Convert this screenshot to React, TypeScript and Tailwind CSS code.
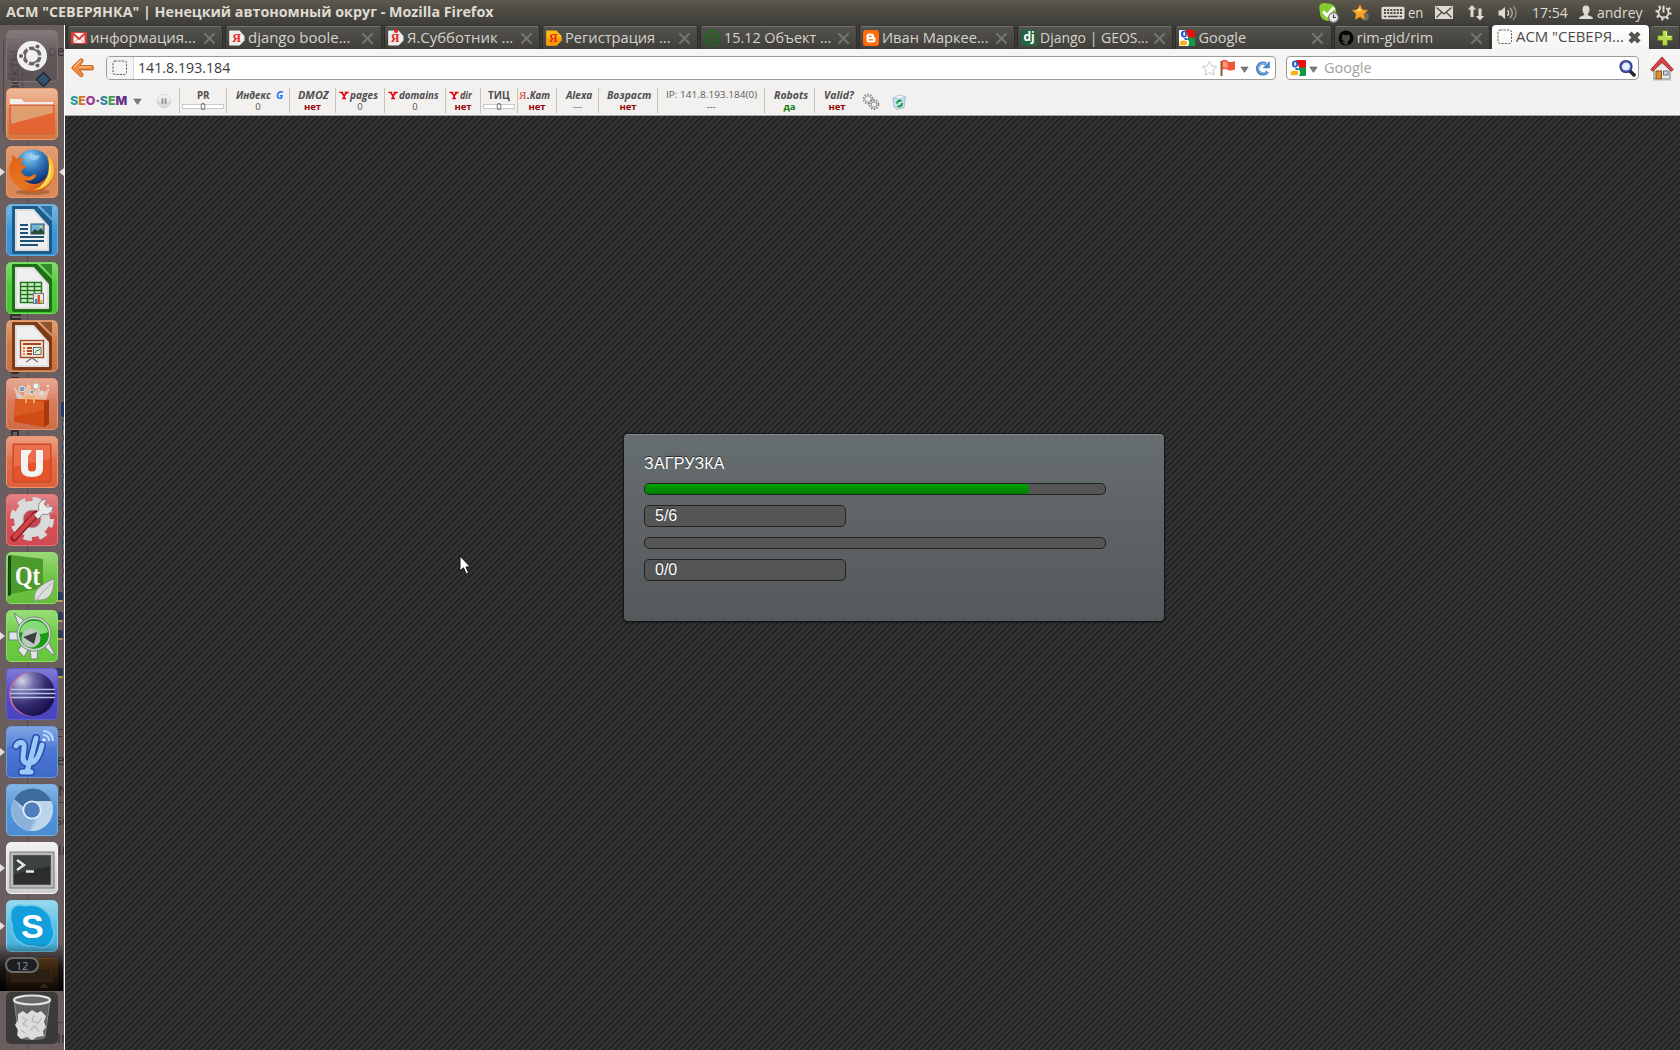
import React, { useLayoutEffect, useRef, useState } from "react";

const UI = "font-['Open_Sans','Noto_Sans',sans-serif]";

/* Text squeezed or stretched horizontally to an exact width. */
function Fit({ w, className = "", children }: { w: number; className?: string; children: React.ReactNode }) {
  const ref = useRef<HTMLSpanElement>(null);
  const [k, setK] = useState(1);
  useLayoutEffect(() => {
    if (ref.current) setK(w / ref.current.offsetWidth);
  }, [w]);
  return (
    <span className="flex shrink-0 whitespace-nowrap" style={{ width: w }}>
      <span ref={ref} className={`block shrink-0 origin-left whitespace-nowrap ${className}`} style={{ transform: `scaleX(${k})` }}>
        {children}
      </span>
    </span>
  );
}

/* ---------- small icons ---------- */

function GoogleIcon() {
  return (
    <svg width="16" height="16" viewBox="0 0 16 16" className="shrink-0">
      <rect width="16" height="16" rx="1" fill="#fff" />
      <path d="M6 0H15a1 1 0 0 1 1 1V8H9L8 4z" fill="#e8100c" />
      <path d="M9 7.5h7V15a1 1 0 0 1-1 1H9c2-3 1-5 0-6z" fill="#109a41" />
      <path d="M0 16v-5l2 1v4z" fill="#f3b51b" opacity=".3" />
      <ellipse cx="5" cy="4" rx="3" ry="3.6" fill="#1c56c9" />
      <ellipse cx="5.2" cy="4" rx="1.1" ry="2" fill="#e9effb" />
      <path d="M5 8l3 .3 1.500 1.700L6 10z" fill="#1c56c9" />
      <ellipse cx="4.600" cy="13" rx="3.700" ry="2.500" fill="#f6b21a" />
    </svg>
  );
}

function DashedPage() {
  return (
    <svg width="16" height="16" viewBox="0 0 16 16" className="shrink-0">
      <rect x="1" y="1" width="13.500" height="13.500" rx="2" fill="none" stroke="#5c5c5c" strokeWidth="1" strokeDasharray="2.200 1.200" />
    </svg>
  );
}

function YandexIcon({ kind }: { kind: "white" | "orange" | "man" }) {
  const orange = kind === "orange";
  return (
    <span className="relative flex h-4 w-4 shrink-0">
      <svg width="16" height="16" viewBox="0 0 16 16">
        <path d="M1 .5h9.500L15.500 6v4.500l-5 5H1a.8.8 0 0 1-.8-.8V1.300A.8.8 0 0 1 1 .5z" fill={orange ? "#fdbb12" : "#ededed"} />
        {orange && <path d="M1 8h14.500v2.500l-5 5H1z" fill="#ff9d00" />}
      </svg>
      <span className="absolute top-0 left-[3px] font-['Liberation_Serif',serif] text-[12px] leading-4 font-bold text-[#e5251b]">Я</span>
      {kind === "man" && <span className="absolute -top-px left-[6px] h-[4px] w-[4px] rounded-full bg-[#e5251b]" />}
    </span>
  );
}

function Favicon({ kind }: { kind: string }) {
  switch (kind) {
    case "gmail":
      return (
        <svg width="16" height="16" viewBox="0 0 16 16" className="shrink-0">
          <rect x="0" y="2" width="16" height="12" rx="1" fill="#dc3a34" />
          <path d="M2.500 3h11v10h-11z" fill="#f6f4f3" />
          <path d="M1.500 3L8 9l6.500-6" fill="none" stroke="#dc3a34" strokeWidth="2" />
          <path d="M3 13L6.500 9M13 13L9.500 9" stroke="#e58a86" strokeWidth="1" />
        </svg>
      );
    case "ya":
      return <YandexIcon kind="white" />;
    case "yaman":
      return <YandexIcon kind="man" />;
    case "yaorange":
      return <YandexIcon kind="orange" />;
    case "green":
      return (
        <svg width="17" height="16" viewBox="0 0 17 16" className="shrink-0">
          <circle cx="8.500" cy="8" r="7.300" fill="none" stroke="#1d6b1d" strokeWidth="1.500" />
          <path d="M3 9c2-4 9-4 11 0M8.500 3v9M5 7l3.500-2L12 7M3 11h11" fill="none" stroke="#1d6b1d" strokeWidth="1.200" />
        </svg>
      );
    case "blogger":
      return (
        <svg width="16" height="16" viewBox="0 0 16 16" className="shrink-0">
          <rect width="16" height="16" rx="3" fill="#ff6a0b" />
          <path d="M6 3.500h2.500a2.500 2.500 0 0 1 2.500 2.500c0 1 .3 1 1 1.200.5.100.5.500.5 1V10a2.600 2.600 0 0 1-2.600 2.600H6A2.600 2.600 0 0 1 3.500 10V6A2.500 2.500 0 0 1 6 3.500z" fill="#fff" />
          <path d="M6.200 6.300h2M6.200 9.800h3.600" stroke="#ff6a0b" strokeWidth="1.300" strokeLinecap="round" />
        </svg>
      );
    case "dj":
      return (
        <span className="flex h-4 w-4 shrink-0 items-center justify-center bg-[#24633f] pb-0.5 font-['Open_Sans',sans-serif] text-[12px] leading-none font-bold text-white">
          dj
        </span>
      );
    case "google":
      return <GoogleIcon />;
    case "github":
      return (
        <svg width="16" height="16" viewBox="0 0 16 16" className="shrink-0">
          <circle cx="8" cy="8" r="7.500" fill="#050505" />
          <path d="M4.500 4.200l1.800.9c1-.3 2.400-.3 3.400 0l1.800-.9c.4 1 .3 1.600.1 2.200 1.200 2.600 0 4.400-2.300 4.700.5.500.5 1 .5 3.400H6.200v-1.600c-1.500.3-2-.3-2.500-1.200 1 .2 1.600.5 2.500.4 0-.5.2-.8.500-1-2.500-.3-3.500-2-2.300-4.700-.2-.6-.3-1.200.1-2.200z" fill="#4b4a46" />
        </svg>
      );
    default:
      return <DashedPage />;
  }
}

function CloseX({ active }: { active?: boolean }) {
  return (
    <svg width="13" height="13" viewBox="0 0 13 13" className="shrink-0">
      {active ? (
        <path d="M2 2l9 9M11 2l-9 9" stroke="#55544f" strokeWidth="4.400" />
      ) : (
        <path d="M2 2l9 9M11 2l-9 9" stroke="#74736e" strokeWidth="2.200" strokeLinecap="round" />
      )}
    </svg>
  );
}

function Tri({ className = "" }: { className?: string }) {
  return (
    <svg width="9" height="7" viewBox="0 0 9 7" className={`shrink-0 ${className}`}>
      <path d="M.8 1h7.400L4.500 6.500z" fill="#7b7a76" stroke="#5f5e5a" strokeWidth=".6" />
    </svg>
  );
}

/* ---------- top panel ---------- */

function TopPanel() {
  return (
    <header className={`flex h-[25px] shrink-0 items-center bg-linear-to-b from-[#5c584c] via-[#4b4942] to-[#3e3d39] text-[14px] leading-none text-[#dfdbd2] ${UI}`}>
      <div className="flex w-[1319px] pl-[6px]">
        <Fit w={488} className="text-[14.500px] font-bold">АСМ "СЕВЕРЯНКА" | Ненецкий автономный округ - Mozilla Firefox</Fit>
      </div>
      <svg width="20" height="21" viewBox="0 0 20 21" className="mr-[13px] shrink-0">
        <path d="M1.500 2C5 .5 7 .8 9 1.500c5 .1 8.500 4 8.200 8.500 1.500 3 .8 6-1 8-2 1.500-4 1.800-6.500.8C4 19 .8 15 1 10.500 0 7 0 4 1.500 2z" fill="#86cc2c" />
        <path d="M4 9.500l4 4L15 5.500" fill="none" stroke="#fff" strokeWidth="3" />
        <circle cx="14.500" cy="15.500" r="4.800" fill="#e8e8e8" stroke="#77777a" strokeWidth="1.200" />
        <path d="M14.500 12.500v3h2.500" stroke="#444" strokeWidth="1.200" fill="none" />
      </svg>
      <svg width="17" height="18" viewBox="0 0 17 18" className="mr-[12px] shrink-0">
        <circle cx="13" cy="12.500" r="4" fill="#6a6a65" />
        <path d="M8 1l2.300 4.700 5.200.7-3.800 3.600.9 5.200L8 12.700l-4.600 2.500.9-5.200L.5 6.400l5.200-.7z" fill="#f7a42a" stroke="#e9861b" strokeWidth=".8" />
        <path d="M8 3.500l1.500 3.300 3.500.5H3z" fill="#ffd56b" />
      </svg>
      <svg width="24" height="14" viewBox="0 0 24 14" className="mr-[3px] shrink-0">
        <rect x=".5" y=".8" width="23" height="12.400" rx="1.500" fill="#dfdbd2" />
        <path d="M3 4h18M3 7h18" stroke="#484640" strokeWidth="2" strokeDasharray="2 1.200" />
        <path d="M3 10.500h2.500M7 10.500h10M18.500 10.500h2.500" stroke="#484640" strokeWidth="1.500" />
      </svg>
      <Fit w={15}>en</Fit>
      <svg width="18" height="13" viewBox="0 0 18 13" className="ml-[12px] shrink-0">
        <rect width="18" height="13" fill="#dfdbd2" />
        <path d="M1.500 1.500L9 8l7.500-6.500M1.500 11.500L6.500 6.500M16.500 11.500l-5-5" fill="none" stroke="#484640" strokeWidth="1.200" />
      </svg>
      <svg width="18" height="17" viewBox="0 0 18 17" className="ml-[14px] shrink-0">
        <path d="M5 1L.8 5.500h2.700V13h3V5.500h2.700zM13 16.500l4.200-4.500h-2.700V4.500h-3V12H8.800z" fill="#dfdbd2" />
      </svg>
      <svg width="20" height="16" viewBox="0 0 20 16" className="ml-[13px] shrink-0">
        <path d="M.5 5.500H3l4-3.500v12l-4-3.500H.5z" fill="#dfdbd2" />
        <path d="M9.500 5.200c1.500 1.500 1.500 4 0 5.600" fill="none" stroke="#dfdbd2" strokeWidth="1.500" />
        <path d="M12 3c3 3 3 7 0 10" fill="none" stroke="#aaa79e" strokeWidth="1.500" />
        <path d="M15 1c4 4 4 10 0 14" fill="none" stroke="#8b8880" strokeWidth="1.500" />
      </svg>
      <div className="ml-[14px] flex"><Fit w={36}>17:54</Fit></div>
      <svg width="14" height="15" viewBox="0 0 14 15" className="ml-[11px] shrink-0">
        <path d="M7 .5c2.500 0 3.500 1.500 3.500 4 0 2-.8 3.500-1.800 4.500.3 2 3.500 2 5 3.500V14H.3v-1.500C1.800 11 5 11 5.300 9c-1-1-1.800-2.500-1.800-4.500 0-2.500 1-4 3.500-4z" fill="#dfdbd2" />
      </svg>
      <div className="ml-[4px] flex"><Fit w={46}>andrey</Fit></div>
      <svg width="17" height="17" viewBox="0 0 17 17" className="ml-[12px] shrink-0">
        <circle cx="8.500" cy="8.500" r="6.800" fill="none" stroke="#dfdbd2" strokeWidth="2.600" strokeDasharray="2.200 3.140" />
        <circle cx="8.500" cy="8.500" r="5" fill="none" stroke="#dfdbd2" strokeWidth="1.800" />
        <path d="M8.500 0v8" stroke="#46443f" strokeWidth="4.600" />
        <path d="M8.500 1.500v7" stroke="#dfdbd2" strokeWidth="2" />
      </svg>
    </header>
  );
}

/* ---------- tabs ---------- */

const TABS = [
  { icon: "gmail", text: "информация...", w: 106 },
  { icon: "ya", text: "django boole...", w: 102 },
  { icon: "yaman", text: "Я.Субботник ...", w: 106 },
  { icon: "yaorange", text: "Регистрация ...", w: 106 },
  { icon: "green", text: "15.12 Объект ...", w: 107 },
  { icon: "blogger", text: "Иван Маркее...", w: 107 },
  { icon: "dj", text: "Django | GEOS...", w: 108 },
  { icon: "google", text: "Google", w: 48 },
  { icon: "github", text: "rim-gid/rim", w: 76 },
];

function Tabs() {
  return (
    <div className={`flex h-6 shrink-0 bg-[#3a3936] pl-[2px] text-[14.500px] leading-none text-[#d6d3ca] ${UI}`}>
      {TABS.map((t) => (
        <div key={t.text} className="w-[158.350px] shrink-0 pt-px pr-[2px]">
          <div className="flex h-[23px] items-center rounded-t-[4px] border border-b-0 border-[#2d2c29] border-t-[#74736c] bg-linear-to-b from-[#53524d] to-[#403f3b] pl-[3px]">
            <Favicon kind={t.icon} />
            <span className="ml-[3px] flex w-[113px]"><Fit w={t.w}>{t.text}</Fit></span>
            <CloseX />
          </div>
        </div>
      ))}
      <div className="flex h-6 w-[157px] shrink-0 items-center rounded-t-[4px] bg-linear-to-b from-white to-[#f5f4f2] pl-[5px] text-[#4a4a4a]">
        <DashedPage />
        <span className="ml-[3px] flex w-[112px]"><Fit w={108}>АСМ "СЕВЕРЯ...</Fit></span>
        <CloseX active />
      </div>
      <div className="ml-px mt-px flex h-[23px] w-[29px] items-center justify-center rounded-tl-[4px] border-t border-[#74736c] bg-linear-to-b from-[#53524d] to-[#403f3b]">
        <svg width="16" height="16" viewBox="0 0 16 16">
          <path d="M5.500.7h5v4.800h4.800v5h-4.800v4.800h-5v-4.800H.7v-5h4.800z" fill="#b5d84e" stroke="#5e7d1c" />
          <path d="M6.500 2h3v4.500H14" fill="none" stroke="#e2f2a6" />
        </svg>
      </div>
    </div>
  );
}

/* ---------- navigation ---------- */

function NavBar() {
  return (
    <div className={`flex h-[39px] shrink-0 items-start bg-linear-to-b from-[#f6f5f4] to-[#f2f1f0] pt-[7px] text-[14.500px] leading-none ${UI}`}>
      <svg width="24" height="22" viewBox="0 0 24 22" className="ml-[6px] mt-[1px] shrink-0">
        <path d="M11.500 2.200c.8 1 .9 2-.5 3.600L8.500 8.600H21.500c1.200 0 1.200 4.300 0 4.300H8.500l2.500 2.800c1.400 1.600 1.300 2.600.5 3.600-.9.700-2 .6-3-.5L1 11.500c-.3-.4-.3-1.100 0-1.500l7.500-7.300c1-1.100 2.100-1.200 3-.5z" fill="#f08a3c" stroke="#b9591a" strokeWidth="1" />
        <path d="M9.800 3.500L3 10.300M8 9.800h12" stroke="#fbc08e" strokeWidth="1.200" fill="none" />
      </svg>
      <div className="ml-[11px] flex h-6 w-[1170px] items-center overflow-hidden rounded-[4px] border border-[#9d9b98] bg-white text-[#3c3c3c]">
        <div className="flex h-full w-[27px] items-center justify-center border-r border-[#d9d8d6] bg-[#f4f4f3]"><DashedPage /></div>
        <span className="ml-[4px] flex w-[1063px]"><Fit w={92}>141.8.193.184</Fit></span>
        <svg width="17" height="17" viewBox="0 0 17 17"><path d="M8.500 1.200l2.200 4.700 5.100.6-3.800 3.500 1 5.100-4.500-2.500L4 15.100l1-5.100L1.200 6.500l5.100-.6z" fill="#fff" stroke="#c9c9c9" /></svg>
        <svg width="18" height="18" viewBox="0 0 18 18" className="ml-[1px] shrink-0">
          <path d="M2.500 2v15" stroke="#8b5a2b" strokeWidth="2" />
          <path d="M3 1.500c3-1.500 5 0 6 1 2 1 4 .5 7-.5v8.500c-3 1-5 1.500-7 .5s-4-1.500-6 0z" fill="#f0553a" />
          <path d="M4 3c2-1 3.500 0 4.500 1v5c-1.500-.8-3-1-4.500-.5z" fill="#ff9a80" />
        </svg>
        <Tri className="mt-[3px] ml-[3px]" />
        <svg width="17" height="17" viewBox="0 0 17 17" className="ml-[5px] shrink-0">
          <path d="M13.500 11.500A5.400 5.400 0 1 1 12 4" fill="none" stroke="#4a86c4" strokeWidth="3.400" />
          <path d="M15.800.8v7.500H8.500z" fill="#4a86c4" />
          <path d="M12.800 11.500A4.800 4.800 0 1 1 12 4.400" fill="none" stroke="#8bb8e3" strokeWidth="1.200" />
        </svg>
      </div>
      <div className="ml-[10px] flex h-6 w-[353px] items-center rounded-[4px] border border-[#9d9b98] bg-white pl-[3px] text-[#a5a19c]">
        <GoogleIcon />
        <Tri className="mt-[2px] ml-[3px]" />
        <span className="ml-[6px] flex w-[294px]"><Fit w={48}>Google</Fit></span>
        <svg width="18" height="18" viewBox="0 0 18 18" className="shrink-0">
          <path d="M11.500 11.500l4.500 4.500" stroke="#24242c" strokeWidth="3.500" strokeLinecap="round" />
          <circle cx="8" cy="7.500" r="5.300" fill="#e9eefa" stroke="#27388f" strokeWidth="2.600" />
          <circle cx="8" cy="7.500" r="4.600" fill="none" stroke="#7c8fd8" strokeWidth=".8" />
        </svg>
      </div>
      <svg width="24" height="25" viewBox="0 0 24 25" className="ml-[11px] shrink-0">
        <path d="M4 12v11h16V12l-8-8z" fill="#ececea" stroke="#7c7b78" strokeWidth="1" />
        <path d="M.8 13.500L12 1l11.200 12.500-1.800 1.800L12 6.500 2.600 15.300z" fill="#d9434a" stroke="#9c2228" strokeWidth=".9" />
        <rect x="6" y="15" width="5.500" height="8" fill="#d8902c" stroke="#8a5610" />
        <rect x="13.500" y="15" width="4.500" height="4" fill="#c6d4e4" stroke="#6d7680" />
        <path d="M3 24h18" stroke="#bbb" />
      </svg>
    </div>
  );
}

/* ---------- seo toolbar ---------- */

type Cell = {
  w: number; pl: number; label: string; lw: number; value: string;
  tone?: "red" | "green"; bar?: boolean; y?: boolean; plain?: boolean; upright?: boolean; g?: boolean; ya?: boolean;
};

const CELLS: Cell[] = [
  { w: 47, pl: 17, label: "PR", lw: 13, value: "0", bar: true, upright: true },
  { w: 63, pl: 9, label: "Индекс", lw: 35, value: "0", g: true },
  { w: 46, pl: 8, label: "DMOZ", lw: 31, value: "нет", tone: "red" },
  { w: 49, pl: 3, label: "pages", lw: 28, value: "0", y: true },
  { w: 61, pl: 3, label: "domains", lw: 40, value: "0", y: true },
  { w: 35, pl: 3, label: "dir", lw: 12, value: "нет", tone: "red", y: true },
  { w: 37, pl: 7, label: "ТИЦ", lw: 22, value: "0", bar: true, upright: true },
  { w: 39, pl: 1, label: ".Кат", lw: 23, value: "нет", tone: "red", ya: true },
  { w: 42, pl: 9, label: "Alexa", lw: 26, value: "---" },
  { w: 59, pl: 8, label: "Возраст", lw: 44, value: "нет", tone: "red" },
  { w: 107, pl: 8, label: "IP: 141.8.193.184(0)", lw: 91, value: "---", plain: true },
  { w: 50, pl: 9, label: "Robots", lw: 34, value: "да", tone: "green" },
  { w: 45, pl: 9, label: "Valid?", lw: 30, value: "нет", tone: "red" },
];

function SeoCell({ c }: { c: Cell }) {
  const tone = c.tone === "red" ? "font-bold text-[#970006]" : c.tone === "green" ? "font-bold text-[#0b7a0b]" : "text-[#555]";
  const face = c.plain ? "text-[9.500px] text-[#5a5a5a]" : c.upright ? "text-[10.500px] font-bold text-[#4f4f4f]" : "text-[10.500px] font-bold italic text-[#4f4f4f]";
  return (
    <div className="flex h-[25px] shrink-0 flex-col border-l border-[#c6c5ae]" style={{ width: c.w }}>
      <div className="flex h-[14px] items-center" style={{ paddingLeft: c.pl }}>
        {c.y && (
          <svg width="10" height="9" viewBox="0 0 10 9" className="mr-[1px] shrink-0">
            <path d="M.3.700h3.900v1.200L5 3.500 6 2.200 5.600.7H9.700v1.500H8.200L6 5v1.800h1V8.300H3.200V6.800h1V5L2 2H.3z" fill="#e3000f" />
          </svg>
        )}
        {c.ya && <span className="flex w-[8px] font-['Liberation_Serif',serif] text-[11px] leading-none text-[#d8352c]">Я</span>}
        <Fit w={c.lw} className={face}>{c.label}</Fit>
        {c.g && <span className="ml-[5px] text-[10.500px] leading-none font-bold text-[#1f6fff] italic">G</span>}
      </div>
      <div className={`flex h-[9px] items-center justify-center text-[9.500px] ${tone}`}>
        {c.bar ? (
          <span className="mx-[2px] flex h-[5px] flex-1 items-center justify-center border border-[#c9c9c9] bg-white">{c.value}</span>
        ) : (
          c.value
        )}
      </div>
    </div>
  );
}

function SeoBar() {
  return (
    <div className={`flex h-7 shrink-0 items-start border-b border-[#a5a4a2] bg-[#f2f1f0] pl-[5px] leading-none ${UI}`}>
      <div className="mt-[6px] flex w-[57px] font-['Inter','Open_Sans',sans-serif] text-[12px] leading-[13px] font-extrabold">
        <Fit w={57}>
          <span className="text-[#2a9aa5]">S</span><span className="text-[#d3742c]">E</span><span className="text-[#9b3192]">O</span>
          <span className="text-[#5f3b91]">·</span><span className="text-[#2b88a0]">S</span><span className="text-[#459a4b]">E</span><span className="text-[#5d2d86]">M</span>
        </Fit>
      </div>
      <Tri className="mt-[10px] ml-[6px]" />
      <svg width="16" height="16" viewBox="0 0 16 16" className="mt-[5px] mr-[7px] ml-[14px] shrink-0">
        <circle cx="8" cy="8" r="6.500" fill="#dcdcdc" stroke="#cacaca" />
        <path d="M1.500 8a6.500 6.500 0 0 1 13 0z" fill="#f0f0f0" />
        <path d="M6.400 5.300v5.400M9.600 5.300v5.400" stroke="#8f8f8f" strokeWidth="1.800" />
      </svg>
      {CELLS.map((c) => <SeoCell key={c.label} c={c} />)}
      <svg width="18" height="18" viewBox="0 0 18 18" className="mt-[5px] ml-[3px] shrink-0">
        <circle cx="6" cy="6" r="4.600" fill="none" stroke="#888" strokeWidth="1.600" strokeDasharray="1.600 1.300" />
        <circle cx="6" cy="6" r="3.200" fill="#f2f1f0" stroke="#999" />
        <circle cx="12" cy="11.500" r="4.600" fill="#f2f1f0" stroke="#777" strokeWidth="1.600" strokeDasharray="1.600 1.300" />
        <circle cx="12" cy="11.500" r="2.800" fill="#eee" stroke="#888" />
      </svg>
      <svg width="16" height="17" viewBox="0 0 16 17" className="mt-[6px] ml-[11px] shrink-0">
        <path d="M2 4l12.500-1.500L13 13.500l-7 2L3 13z" fill="#c8dff0" stroke="#93b7d4" strokeWidth=".8" />
        <path d="M2 4L8 1l6.500 1.500L9 5z" fill="#edf6fc" stroke="#93b7d4" strokeWidth=".7" />
        <path d="M6 9.500a3 3 0 0 1 4.500-2.500M11 9a3 3 0 0 1-4.500 3" fill="none" stroke="#149a3a" strokeWidth="2" />
      </svg>
    </div>
  );
}

/* ---------- launcher ---------- */

const svgBox = { width: 52, height: 52, viewBox: "0 0 52 52" };

function OfficeDoc({ dark, children }: { dark: string; children: React.ReactNode }) {
  return (
    <svg {...svgBox}>
      <path d="M7 2h24l15 15v31a2 2 0 0 1-2 2H8a2 2 0 0 1-2-2V3a1 1 0 0 1 1-1z" fill={dark} />
      <path d="M34 2h12v12z" fill={dark} opacity=".75" />
      <path d="M9 5h19l15 17v25H9z" fill="#dedede" />
      <path d="M11 7h16l14 16v22H11z" fill="#efefef" />
      <path d="M28 5l15 17v-3L31 5z" fill={dark} opacity=".5" />
      {children}
    </svg>
  );
}

const LAUNCHER: { tile: string; l?: boolean; r?: boolean; icon: React.ReactNode }[] = [
  {
    tile: "from-[#e9a27a] to-[#d8733f] border-[#eb9a6c]",
    icon: (
      <svg {...svgBox}>
        <path d="M4 11h11l3 3h29v5H4z" fill="#f3efec" />
        <path d="M4 17h44v29H4z" fill="#e57a48" stroke="#c75a2e" />
        <path d="M5 18h42v7L5 36z" fill="#dfa678" opacity=".8" />
        <path d="M5 36l42-11v20H5z" fill="#e2602f" opacity=".8" />
      </svg>
    ),
  },
  {
    tile: "from-[#d9814b] to-[#d98a5c] border-[#eb9a6c]", l: true, r: true,
    icon: (
      <svg {...svgBox}>
        <defs>
          <radialGradient id="fxGlobe" cx=".4" cy=".2" r=".8"><stop offset="0" stopColor="#8fd0f5" /><stop offset=".5" stopColor="#2c74b8" /><stop offset="1" stopColor="#0e2a66" /></radialGradient>
          <linearGradient id="fxFox" x1="0" y1="0" x2="1" y2="1"><stop offset="0" stopColor="#e2621b" /><stop offset=".6" stopColor="#e9751d" /><stop offset="1" stopColor="#b8400f" /></linearGradient>
        </defs>
        <ellipse cx="27" cy="46" rx="17" ry="3" fill="#8b4a24" opacity=".5" />
        <circle cx="27" cy="21" r="17.500" fill="url(#fxGlobe)" />
        <path d="M24 7c3 1 5 3 9 2 2 4-3 5-6 5s-3-4-3-7z" fill="#a6dcf4" opacity=".7" />
        <path d="M43 11c6 8 7 20 0 28-7 8-20 9-29 3C5 36 2 27 4 19c.5-2 1-3 2-4 0-3 0-4 1-6 2 2 3 3 5 4 2-1 4-1 6 0-2 1-3 3-3 5l5 2c0 2-4 3-5 5 2 6 8 7 12 4 2-1 4 0 3 1-2 4-7 6-12 4 9 8 24 4 25-12 0-3 0-7-2-10z" fill="url(#fxFox)" />
        <path d="M42 9c7 8 8 20 2 27-5 7-12 8-17 8 13-4 18-15 15-35z" fill="#f6c73b" />
        <path d="M44 20c1 9-3 16-9 21" fill="none" stroke="#fbe57b" strokeWidth="1.500" />
      </svg>
    ),
  },
  {
    tile: "from-[#4ba1da] to-[#3d8dcb] border-[#5cb0e6]",
    icon: (
      <OfficeDoc dark="#1c5b88">
        <path d="M14 21h8M14 25h8M14 29h8M14 33h24M14 37h24M14 41h18" stroke="#1c5276" strokeWidth="2" />
        <rect x="25" y="20" width="13" height="10" fill="#73b3dc" stroke="#1c5276" />
        <path d="M25 29l4-4 3 2 3-3 3 4v2H25z" fill="#2a4a3a" />
        <circle cx="35" cy="23" r="1.300" fill="#f4c542" />
      </OfficeDoc>
    ),
  },
  {
    tile: "from-[#55cd40] to-[#48c234] border-[#6cdf58]",
    icon: (
      <OfficeDoc dark="#1d6f16">
        <path d="M14.500 20.500h21v20h-21zM14.500 24.500h21M14.500 28.500h21M14.500 32.500h21M14.500 36.500h21M21.500 20.500v20M28.500 20.500v20" fill="#d6ecd2" stroke="#1c7a14" strokeWidth="1.400" />
        <rect x="27.500" y="31.500" width="10" height="10" fill="#e9e9e9" stroke="#777" />
        <path d="M29 41v-4h2.500v4z" fill="#2a86cc" /><path d="M31.500 41v-8H34v8z" fill="#d65b2a" /><path d="M34 41v-3h2.500v3z" fill="#edb321" />
      </OfficeDoc>
    ),
  },
  {
    tile: "from-[#cf8250] to-[#c97341] border-[#e09563]",
    icon: (
      <OfficeDoc dark="#7c3a16">
        <rect x="14.500" y="20.500" width="23" height="17" fill="#f2e6dc" stroke="#a8481a" strokeWidth="1.400" />
        <path d="M17 24h18M21 28h5M21 31h5M21 34h5" stroke="#a8481a" strokeWidth="2" />
        <path d="M17 28h2M17 31h2M17 34h2" stroke="#d28a5a" strokeWidth="2" />
        <rect x="27.500" y="27.500" width="7.500" height="7" fill="#e8efe4" stroke="#666" />
        <path d="M29 33l2-3 1 1 2-2" stroke="#2b9a3a" fill="none" />
        <path d="M26 37v2M20 42l6-4 6 4" stroke="#777" strokeWidth="1.500" fill="none" />
      </OfficeDoc>
    ),
  },
  {
    tile: "from-[#dd8b6e] to-[#cf6c48] border-[#e89474]",
    icon: (
      <svg {...svgBox}>
        <path d="M12 22L7 8l10 10L22 5l5 12L33 4l2 13L44 9l-4 13z" fill="#f6dccd" opacity=".6" />
        <path d="M9 21l34 1v24l-5 3L8 44z" fill="#cf4c17" />
        <path d="M38 24l5-2v24l-5 3z" fill="#a63a0e" />
        <path d="M9 21l29 2.500V32L9 38z" fill="#da5c24" />
        <path d="M20 25v-6h8v6" fill="none" stroke="#f0b060" strokeWidth="1.800" />
        <circle cx="16" cy="11" r="3" fill="#7f9cb8" stroke="#e8e8e8" /><circle cx="30" cy="8" r="3" fill="#f2f2f2" stroke="#bbb" /><circle cx="23" cy="9" r="2" fill="#e9c9a6" />
        <circle cx="13" cy="18" r="2.500" fill="#c6d2dc" /><circle cx="26" cy="14" r="2" fill="#6d89a5" stroke="#eee" /><circle cx="36" cy="15" r="2.500" fill="#d6dbe0" /><circle cx="42" cy="8" r="1" fill="#fff" />
      </svg>
    ),
  },
  {
    tile: "from-[#e67d58] to-[#dd6038] border-[#ee9570]",
    icon: (
      <svg {...svgBox}>
        <rect x="7" y="8" width="38" height="38" rx="1" fill="#e6522a" stroke="#c4431e" />
        <path d="M8 9h36v14L8 31z" fill="#ee8264" opacity=".6" />
        <path d="M15 14h11l-4 6v12c0 2.500 1.500 3.500 4 3.500s4-1 4-3.500V14h7v19c0 5-4 8-11 8s-11-3-11-8z" fill="#f2f2f2" />
      </svg>
    ),
  },
  {
    tile: "from-[#d85a60] to-[#cf4a50] border-[#ea7478]",
    icon: (
      <svg {...svgBox}>
        <circle cx="26" cy="25" r="19" fill="none" stroke="#d7d9d8" strokeWidth="6" strokeDasharray="8 6.920" />
        <circle cx="26" cy="25" r="13.500" fill="none" stroke="#d9dbda" strokeWidth="9" />
        <circle cx="26" cy="25" r="9" fill="#c84450" stroke="#aeb0b0" />
        <path d="M8 44L30 20" stroke="#8f1b1f" strokeWidth="7" strokeLinecap="round" />
        <path d="M8.500 43L29 21" stroke="#cf4446" strokeWidth="4.500" strokeLinecap="round" />
        <path d="M28 21l5-5c-2-5 2-11 8-11l-3 5 3 3 6-1c0 6-5 10-10 8l-5 5z" fill="#e9ebea" stroke="#7e807f" strokeWidth=".9" />
      </svg>
    ),
  },
  {
    tile: "from-[#7aca4c] to-[#66bd3b] border-[#8fdc66]",
    icon: (
      <svg {...svgBox}>
        <path d="M2 4l3-1v40l-3 1z" fill="#184a14" />
        <path d="M5 3l32 4v29L5 42z" fill="#4d9a2c" />
        <text x="9" y="33" fontFamily="Liberation Serif, serif" fontWeight="700" fontSize="28" textLength="25" lengthAdjust="spacingAndGlyphs" fill="#fff">Qt</text>
        <path d="M29 49c-2-9 2-15 19-22 0 14-5 22-16 21z" fill="#dcdedc" stroke="#909690" />
        <path d="M29 50c4-6 9-12 17-19" fill="none" stroke="#a0a5a0" />
      </svg>
    ),
  },
  {
    tile: "from-[#74d34a] to-[#65c63c] border-[#8fdf66]", l: true,
    icon: (
      <svg {...svgBox}>
        <path d="M8 3l12 9-6 6zM3 22h11v8H3zM12 40l5-6 6 4-5 9zM24 38h8l-1 11h-6zM36 34l5-5 8 16-3-1z" fill="#e3e5e4" stroke="#777f80" />
        <circle cx="28" cy="24" r="17" fill="#d5d8d7" stroke="#7d8486" />
        <circle cx="28" cy="24" r="15" fill="#1d9a1a" />
        <path d="M14 22c2-15 26-15 28 0-6 3-20 3-28 0z" fill="#a4e88e" opacity=".8" />
        <circle cx="25" cy="28" r="9.500" fill="#bfc9bf" />
        <path d="M17 27l14-5-3 12z" fill="#3b413f" />
      </svg>
    ),
  },
  {
    tile: "from-[#5550c8] to-[#4a45bc] border-[#625cd8]",
    icon: (
      <svg {...svgBox}>
        <defs><radialGradient id="ecl" cx=".25" cy=".2" r=".85"><stop offset="0" stopColor="#d5d3ec" /><stop offset=".3" stopColor="#7772ae" /><stop offset=".65" stopColor="#332c70" /><stop offset="1" stopColor="#19104e" /></radialGradient></defs>
        <circle cx="25" cy="26" r="22" fill="#c06c9a" />
        <circle cx="27" cy="26" r="22" fill="url(#ecl)" />
        <path d="M5 21.500h44M4.500 25.500h45M5 29.500h44" stroke="#b6c2e2" strokeWidth="1.300" />
      </svg>
    ),
  },
  {
    tile: "from-[#5586da] to-[#4069c8] border-[#6f98e2]", l: true,
    icon: (
      <svg {...svgBox}>
        <path d="M10 20c2-4 7-5 8-1 1 5-4 16 2 18 9 2 13-6 16-18M30 12c-3 12-5 22-9 33M16 46h9" fill="none" stroke="#254fae" strokeWidth="8" strokeLinecap="round" />
        <path d="M10 20c2-4 7-5 8-1 1 5-4 16 2 18 9 2 13-6 16-18M30 12c-3 12-5 22-9 33M16 46h9" fill="none" stroke="#9cc8f8" strokeWidth="5" strokeLinecap="round" />
        <circle cx="38" cy="14" r="1.800" fill="#d8eafd" />
        <path d="M37 9c4 0 6 2 6 6M37 5c6 0 10 4 10 10" fill="none" stroke="#bcdcfb" strokeWidth="2" />
      </svg>
    ),
  },
  {
    tile: "from-[#5c9cdc] to-[#4c8cd2] border-[#74b0e8]",
    icon: (
      <svg {...svgBox}>
        <circle cx="26" cy="26" r="21" fill="#a7c8e8" />
        <path d="M8 15A21 21 0 0 1 45.500 17H26a9 9 0 0 0-8.500 6z" fill="#3d6b9a" />
        <path d="M8 15c-6 12 0 27 15 32l7-13c-5 2-11 0-13-6z" fill="#8bb2da" />
        <path d="M45.500 17c5 14-4 30-20 30L35 29c1-4 0-9-4-12z" fill="#bcd5ec" />
        <circle cx="26" cy="26" r="9.500" fill="#e4eff9" />
        <circle cx="26" cy="26" r="7.800" fill="#4f80bb" />
      </svg>
    ),
  },
  {
    tile: "from-[#ececec] to-[#cfcfcf] border-[#f4f4f4]", l: true,
    icon: (
      <svg {...svgBox}>
        <rect x="4" y="10" width="44" height="36" fill="#b9b9b9" stroke="#7c7c7c" />
        <rect x="7.500" y="13.500" width="37" height="29" fill="#2c2e2e" stroke="#555" />
        <path d="M8 14h36v10L8 32z" fill="#4b4e4e" opacity=".6" />
        <path d="M11 18l7 5-7 5" fill="none" stroke="#e9e9e9" strokeWidth="2.400" />
        <path d="M20 29.500h8" stroke="#e9e9e9" strokeWidth="2.400" />
      </svg>
    ),
  },
  {
    tile: "from-[#74cce8] to-[#45b0dd] border-[#80d4ee]", l: true,
    icon: (
      <svg {...svgBox}>
        <path d="M5 13C5 7 12 3 19 6c14-3 27 6 27 20 4 7 1 18-7 21-4 1-7 1-10-1C15 48 5 37 6 24c-2-4-2-7-1-11z" fill="#129fdb" stroke="#65caee" strokeWidth="1.500" />
        <text x="15" y="38" fontFamily="Liberation Sans, sans-serif" fontWeight="700" fontSize="34" fill="#fff">S</text>
      </svg>
    ),
  },
];

function UbuntuIcon() {
  return (
    <svg {...svgBox}>
      <circle cx="26" cy="26" r="15" fill="#f0f0f0" />
      <circle cx="26" cy="26" r="7.800" fill="none" stroke="#6b6465" strokeWidth="3.400" strokeDasharray="14.300 2.030" strokeDashoffset="-1" />
      {[[15, 26], [31.500, 16.500], [31.500, 35.500]].map(([x, y]) => (
        <circle key={`${x}-${y}`} cx={x} cy={y} r="2.700" fill="#6b6465" stroke="#f0f0f0" strokeWidth="1.200" />
      ))}
    </svg>
  );
}

function Ghost({ top, h = 10, left = 54, color = "bg-[#4a4650]" }: { top: number; h?: number; left?: number; color?: string }) {
  return <span className={`absolute w-[9px] rounded-[2px] ${color}`} style={{ top, left, height: h }} />;
}

function Launcher() {
  return (
    <aside className={`relative flex h-full w-[65px] shrink-0 flex-col overflow-hidden border-r border-white bg-[#6a5e5f] pt-[5px] ${UI}`}>
      {/* remains of the desktop visible through the translucent launcher */}
      <div className="absolute inset-0 text-[15px] leading-none text-[#332e33]">
        <span className="absolute top-[14px] left-[3px] h-[95px] w-5 rounded-[3px] border border-[#4f4647]" />
        <span className="absolute top-[110px] left-[27px] h-[620px] w-px bg-[#574c4d]" />
        <span className="absolute top-[730px] left-[27px] h-[295px] w-px bg-[#574c4d]" />
        <span className="absolute top-[19px] left-[48px] text-[14px]">ое</span>
        <span className="absolute top-[25px] left-[6px] rotate-180 [writing-mode:vertical-rl]">оекты</span>
        <span className="absolute top-[165px] left-[9px] h-[5px] w-[10px] bg-[#332e33]" />
        <span className="absolute top-[237px] left-[11px] h-[8px] w-[8px] border-y-2 border-[#332e33]" />
        <span className="absolute top-[289px] left-[10px] h-[6px] w-[11px] border-2 border-r-0 border-[#332e33]" />
        <span className="absolute top-[347px] left-[11px] h-[7px] w-[8px] border-y-2 border-[#332e33]" />
        <span className="absolute top-[405px] left-[11px] h-[8px] w-[8px] border-2 border-[#332e33]" />
        <Ghost top={377} h={15} left={61} color="bg-[#243a68]" />
        {[395, 414, 433, 452, 471, 490, 509, 528, 547].map((t) => (
          <React.Fragment key={t}><Ghost top={t} h={17} left={62} color="border border-[#4a4248] bg-[#8f8a90]" /><Ghost top={t + 6} h={4} left={63} color="bg-[#2b7fc4]" /></React.Fragment>
        ))}
        {[567, 587, 605, 643].map((t) => (
          <React.Fragment key={t}><Ghost top={t} h={10} color="bg-[#2c3b5c]" /><Ghost top={t + 8} h={2} color="bg-[#b59a4a]" /></React.Fragment>
        ))}
        <span className="absolute top-[711px] left-[27px] h-px w-9 bg-[#453c3d]" />
        <span className="absolute top-[704px] left-[27px] h-px w-9 bg-[#453c3d]" />
        <span className="absolute top-[727px] left-[56px]">ес</span>
        <span className="absolute top-[758px] left-[58px]">N</span>
        <span className="absolute top-[787px] left-[55px]">se</span>
        <span className="absolute top-[817px] left-[58px]">in</span>
        <span className="absolute top-[777px] left-[56px] h-px w-2 bg-[#453c3d]" />
        <span className="absolute top-[997px] left-[27px] h-px w-9 bg-[#453c3d]" />
        <span className="absolute top-[1005px] left-[57px]">in</span>
      </div>
      <div className="relative ml-[6px] h-[52px] w-[52px] shrink-0 rounded-[5px] border border-[#7f7576] bg-linear-to-b from-[#8b8283]/80 via-[#5d5556]/60 to-[#544a4b]/60">
        <div className="-m-px"><UbuntuIcon /></div>
        <span className="absolute bottom-[-4px] left-[31px] h-[11px] w-[11px] rotate-45 border border-[#14202b] bg-[#355066]" />
      </div>
      <div className="relative mt-[6px] flex shrink-0 flex-col gap-[6px]">
        {LAUNCHER.map((it, i) => (
          <div key={i} className="flex h-[52px] items-center">
            <span className="flex w-[6px]">
              {it.l && <svg width="5" height="8" viewBox="0 0 5 8"><path d="M0 0l5 4-5 4z" fill="#e2dfdf" /></svg>}
            </span>
            <div className={`relative h-[52px] w-[52px] overflow-hidden rounded-[5px] border bg-linear-to-b ${it.tile}`}>
              <div className="absolute inset-x-0 top-0 h-[20px] bg-linear-to-b from-white/25 to-white/5" />
              <div className="relative -m-px">{it.icon}</div>
            </div>
            {it.r && <svg width="5" height="8" viewBox="0 0 5 8" className="ml-px"><path d="M5 0L0 4l5 4z" fill="#e2dfdf" /></svg>}
          </div>
        ))}
      </div>
      <div className="absolute top-[918px] left-0 flex h-[48px] w-[63px] bg-linear-to-b from-black/0 via-black/75 to-black">
        <div className="absolute top-[15px] left-[6px] h-[33px] w-[52px] rounded-t-[5px] border-t border-[#67451e] bg-linear-to-b from-[#4b3216] to-[#0e0905]" />
        <svg width="52" height="30" viewBox="0 0 52 30" className="absolute top-[18px] left-[6px]"><path d="M8 8h36l3 12H5zM34 27l4-4 4 4" fill="#2c2013" stroke="#3a2b1a" /></svg>
        <span className="absolute top-[14px] left-[5px] flex h-[16px] w-[34px] items-center justify-center rounded-[8px] border-2 border-[#6b6d6e] bg-[#1c1e1f] text-[11px] leading-none text-[#8d9397]">12</span>
      </div>
      <div className="absolute top-[967px] left-[6px] h-[52px] w-[52px] rounded-[5px] bg-linear-to-b from-[#3e3b3b] to-[#3a3838]">
        <svg {...svgBox}>
          <path d="M8 8l5 37c1 3 25 3 26 0l5-37z" fill="#6a6c6b" opacity=".75" stroke="#a2a4a3" />
          <ellipse cx="26" cy="8" rx="18" ry="4.500" fill="#686a69" stroke="#e3e5e4" strokeWidth="2.200" />
          <path d="M12 22l5-3 4 3 5-4 5 3 4-2 5 5-2 6 2 5-3 4 1 5-7 1-5 3-5-3-6 2-4-4 1-5-3-5 3-5z" fill="#dcdcdb" />
          <path d="M16 25l5 3-4 4 5 3M28 23l-2 6 6 2 4-5M24 38l5-4 4 6M15 38l4 3" stroke="#b4b5b4" strokeWidth="1.200" fill="none" />
        </svg>
      </div>
    </aside>
  );
}

/* ---------- page ---------- */

function Progress({ value }: { value: number }) {
  return (
    <div className="h-3 w-[462px] overflow-hidden rounded-[5px] border border-[#222] bg-[#555]">
      <div className="h-full rounded-[4px] bg-linear-to-b from-[#00a400] to-[#007c00]" style={{ width: `${value * 100}%` }} />
    </div>
  );
}

function Counter({ children }: { children: string }) {
  return (
    <div className="h-[22px] w-[202px] rounded-[5px] border border-[#222] bg-[#555] pl-[10px] text-[16px] leading-[19px] [text-shadow:0_-1px_1px_#222]">{children}</div>
  );
}

function Page() {
  return (
    <main className="relative flex flex-1 justify-center bg-[#2b2b2b] bg-[repeating-linear-gradient(135deg,#242424_0px,#242424_1.400px,#353535_2.200px,#353535_3.600px,#242424_4.243px)] pt-[318px] pl-[43px]">
      <section className="flex h-[187px] w-[540px] shrink-0 flex-col rounded-[4px] border-t border-[#81888a] bg-linear-to-b from-[#676e70] to-[#54595b] pt-[19px] pl-5 font-['Liberation_Sans',Arial,sans-serif] text-[16px] text-white shadow-[0_0_1px_1px_#171717,0_1px_2px_#000]">
        <div className="h-[29px] leading-[20px] tracking-[0.250px] [text-shadow:0_-1px_1px_#222]">ЗАГРУЗКА</div>
        <div className="flex flex-col gap-[10px]">
          <Progress value={0.834} />
          <Counter>5/6</Counter>
          <Progress value={0} />
          <Counter>0/0</Counter>
        </div>
      </section>
      <svg width="12" height="20" viewBox="0 0 12 20" className="absolute top-[439px] left-[394px]">
        <path d="M1 1v15l3.500-3.200 2.500 6 2.600-1.100L7 11.900h4.300z" fill="#fff" stroke="#111" strokeWidth="1" />
      </svg>
    </main>
  );
}

export default function App() {
  return (
    <div className="flex h-[1050px] w-[1680px] flex-col overflow-hidden bg-[#3a3936]">
      <TopPanel />
      <div className="flex min-h-0 flex-1">
        <Launcher />
        <div className="flex min-w-0 flex-1 flex-col">
          <Tabs />
          <NavBar />
          <SeoBar />
          <Page />
        </div>
      </div>
    </div>
  );
}
